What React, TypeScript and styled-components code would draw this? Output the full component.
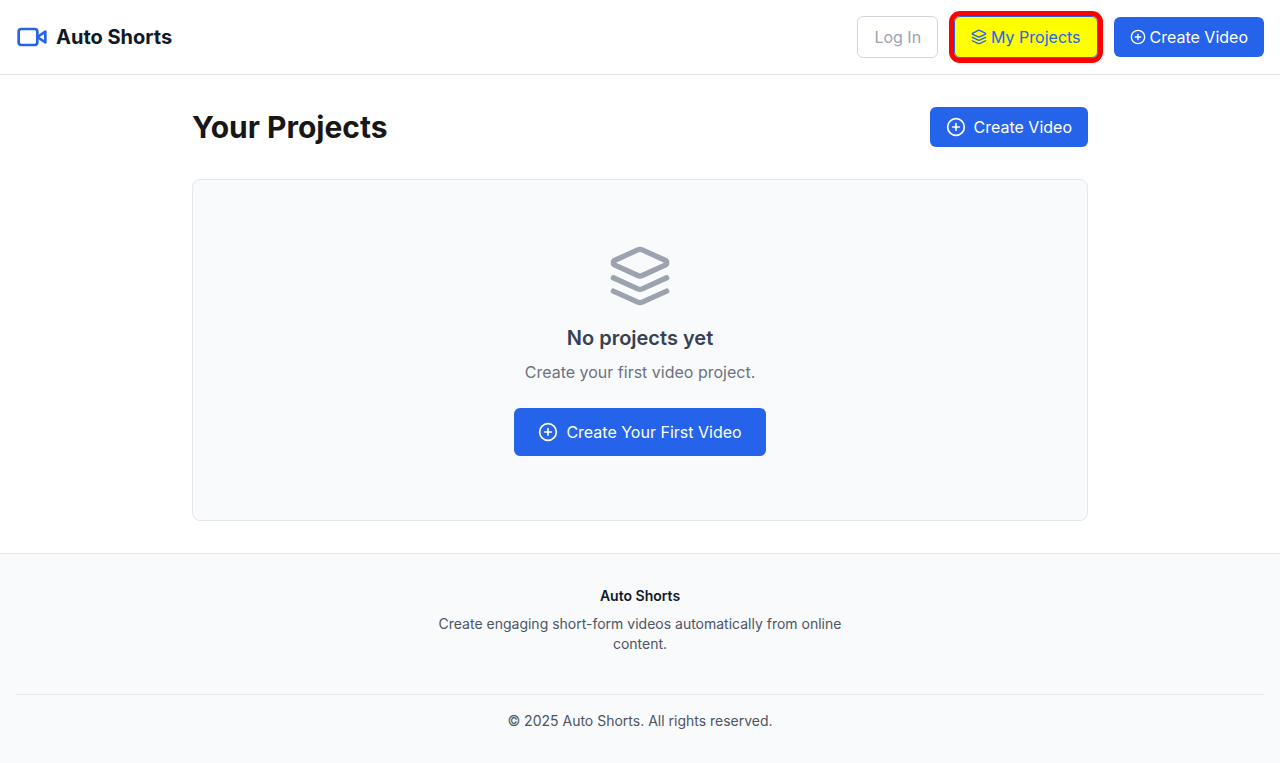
import React from "react";
import styled, { createGlobalStyle, css } from "styled-components";

const GlobalStyle = createGlobalStyle`
  *, *::before, *::after { box-sizing: border-box; }
  body {
    margin: 0;
    background: #ffffff;
    color: #171717;
    font-family: Inter, "Liberation Sans", sans-serif;
    font-size: 16px;
    line-height: 24px;
    -webkit-font-smoothing: antialiased;
  }
  h1, h2, h3, p { margin: 0; }
  svg { display: block; flex-shrink: 0; }
`;

const Page = styled.div`
  display: flex;
  flex-direction: column;
  min-height: 100vh;
`;

const Header = styled.header`
  display: flex;
  align-items: center;
  justify-content: space-between;
  padding: 16px;
  border-bottom: 1px solid #e5e7eb;
`;

const Brand = styled.a`
  display: flex;
  align-items: center;
  gap: 8px;
  color: #111827;
  font-size: 20px;
  font-weight: 700;
  line-height: 28px;
  text-decoration: none;

  svg { color: #2563eb; }
`;

const Nav = styled.nav`
  display: flex;
  align-items: center;
  gap: 16px;
`;

type ActionProps = {
  $variant?: "primary" | "muted" | "highlight";
  $large?: boolean;
  $gap?: number;
};

const variants = {
  primary: css`
    background: #2563eb;
    color: #ffffff;
  `,
  muted: css`
    background: transparent;
    border: 1px solid #d1d5db;
    color: #9ca3af;
  `,
  highlight: css`
    background: #ffff00;
    border: 1px solid #2563eb;
    color: #2563eb;
    outline: 5px solid #ff0000;
  `,
};

const Action = styled.button<ActionProps>`
  display: inline-flex;
  align-items: center;
  gap: ${({ $gap = 8 }) => $gap}px;
  padding: ${({ $large }) => ($large ? "12px 24px" : "8px 16px")};
  border: 0;
  border-radius: 6px;
  font: inherit;
  text-decoration: none;
  white-space: nowrap;
  cursor: pointer;
  ${({ $variant = "primary" }) => variants[$variant]}

  &:disabled { cursor: not-allowed; }
`;

const Main = styled.main`
  width: 100%;
  max-width: 928px;
  margin: 0 auto;
  padding: 32px 16px;
`;

const TitleRow = styled.div`
  display: flex;
  align-items: center;
  justify-content: space-between;
  margin-bottom: 32px;
`;

const Title = styled.h1`
  font-size: 30px;
  font-weight: 700;
  line-height: 36px;
`;

const EmptyCard = styled.section`
  display: flex;
  flex-direction: column;
  align-items: center;
  padding: 64px 16px;
  border: 1px solid #e5e7eb;
  border-radius: 8px;
  background: #f9fafb;
  text-align: center;

  > svg { color: #9ca3af; }
`;

const EmptyTitle = styled.h2`
  margin: 16px 0 8px;
  color: #374151;
  font-size: 20px;
  font-weight: 600;
  line-height: 28px;
`;

const EmptyText = styled.p`
  margin-bottom: 24px;
  color: #6b7280;
`;

const Footer = styled.footer`
  flex: 1;
  padding: 32px 16px;
  border-top: 1px solid #e5e7eb;
  background: #f9fafb;
  color: #4b5563;
  font-size: 14px;
  line-height: 20px;
  text-align: center;
`;

const FooterAbout = styled.div`
  max-width: 448px;
  margin: 0 auto 40px;
`;

const FooterTitle = styled.h3`
  margin-bottom: 8px;
  color: #111827;
  font-size: 14px;
  font-weight: 600;
`;

const Copyright = styled.p`
  padding-top: 16px;
  border-top: 1px solid #e5e7eb;
`;

type IconProps = { size: number };

function Icon({ size, children }: IconProps & { children: React.ReactNode }) {
  return (
    <svg
      width={size}
      height={size}
      viewBox="0 0 24 24"
      fill="none"
      stroke="currentColor"
      strokeWidth="2"
      strokeLinecap="round"
      strokeLinejoin="round"
      aria-hidden="true"
    >
      {children}
    </svg>
  );
}

const VideoIcon = ({ size }: IconProps) => (
  <Icon size={size}>
    <path d="m22 8-6 4 6 4V8Z" />
    <rect width="14" height="12" x="2" y="6" rx="2" ry="2" />
  </Icon>
);

const LayersIcon = ({ size }: IconProps) => (
  <Icon size={size}>
    <path d="m12.83 2.18a2 2 0 0 0-1.66 0L2.6 6.08a1 1 0 0 0 0 1.83l8.58 3.91a2 2 0 0 0 1.66 0l8.58-3.9a1 1 0 0 0 0-1.83Z" />
    <path d="m22 17.65-9.17 4.16a2 2 0 0 1-1.66 0L2 17.65" />
    <path d="m22 12.65-9.17 4.16a2 2 0 0 1-1.66 0L2 12.65" />
  </Icon>
);

const PlusCircleIcon = ({ size }: IconProps) => (
  <Icon size={size}>
    <circle cx="12" cy="12" r="10" />
    <path d="M8 12h8" />
    <path d="M12 8v8" />
  </Icon>
);

export default function App() {
  return (
    <Page>
      <GlobalStyle />
      <Header>
        <Brand href="#">
          <VideoIcon size={32} />
          Auto Shorts
        </Brand>
        <Nav>
          <Action type="button" $variant="muted" disabled>
            Log In
          </Action>
          <Action as="a" href="#projects" $variant="highlight" $gap={4}>
            <LayersIcon size={16} />
            My Projects
          </Action>
          <Action as="a" href="#create" $gap={4}>
            <PlusCircleIcon size={16} />
            Create Video
          </Action>
        </Nav>
      </Header>
      <Main>
        <TitleRow>
          <Title>Your Projects</Title>
          <Action as="a" href="#create">
            <PlusCircleIcon size={20} />
            Create Video
          </Action>
        </TitleRow>
        <EmptyCard>
          <LayersIcon size={64} />
          <EmptyTitle>No projects yet</EmptyTitle>
          <EmptyText>Create your first video project.</EmptyText>
          <Action as="a" href="#create" $large>
            <PlusCircleIcon size={20} />
            Create Your First Video
          </Action>
        </EmptyCard>
      </Main>
      <Footer>
        <FooterAbout>
          <FooterTitle>Auto Shorts</FooterTitle>
          <p>Create engaging short-form videos automatically from online content.</p>
        </FooterAbout>
        <Copyright>© 2025 Auto Shorts. All rights reserved.</Copyright>
      </Footer>
    </Page>
  );
}
